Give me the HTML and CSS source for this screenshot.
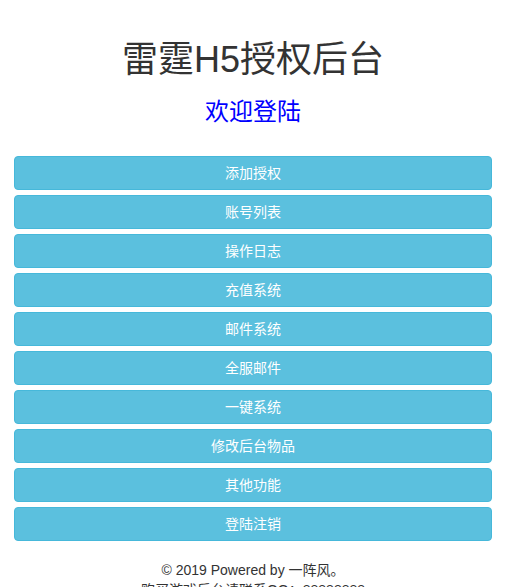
FILE: index.html
```html
<!DOCTYPE html>
<html lang="zh-CN">
<head>
<meta charset="utf-8">
<title>雷霆H5授权后台</title>
<link rel="stylesheet" href="styles.css">
</head>
<body>
<div class="page">
  <h1 class="title">雷霆H5授权后台</h1>
  <h2 class="subtitle">欢迎登陆</h2>
  <div class="menu">
    <a class="btn">添加授权</a>
    <a class="btn">账号列表</a>
    <a class="btn">操作日志</a>
    <a class="btn">充值系统</a>
    <a class="btn">邮件系统</a>
    <a class="btn">全服邮件</a>
    <a class="btn">一键系统</a>
    <a class="btn">修改后台物品</a>
    <a class="btn">其他功能</a>
    <a class="btn">登陆注销</a>
  </div>
  <footer class="footer">
    <p>© 2019 Powered by 一阵风。</p>
    <p>购买游戏后台请联系QQ：88888888</p>
  </footer>
</div>
</body>
</html>
```
FILE: styles.css
```css
html, body {
  margin: 0;
  padding: 0;
  background: #fff;
}
body {
  font-family: "Liberation Sans", Arial, "Noto Sans CJK SC", sans-serif;
  font-size: 14px;
  line-height: 1.42857;
  color: #333;
}
.page {
  padding: 0 14px;
}
.title {
  margin: 40px 0 0;
  font-size: 36px;
  font-weight: normal;
  line-height: 1.1;
  text-align: center;
  color: #333;
}
.subtitle {
  margin: 19px 0 0;
  font-size: 24px;
  font-weight: normal;
  line-height: 1.1;
  text-align: center;
  color: #00f;
}
.menu {
  margin-top: 31px;
  display: flex;
  flex-direction: column;
  gap: 5px;
}
.btn {
  display: block;
  box-sizing: border-box;
  height: 34px;
  padding: 6px 12px;
  font-size: 14px;
  line-height: 20px;
  text-align: center;
  color: #fff;
  background: #5bc0de;
  border: 1px solid #46b8da;
  border-radius: 4px;
}
.footer {
  margin-top: 19px;
  text-align: center;
}
.footer p {
  margin: 0;
  line-height: 20px;
}
```
